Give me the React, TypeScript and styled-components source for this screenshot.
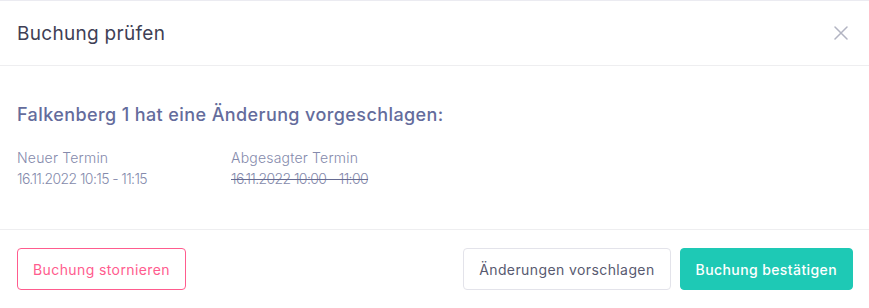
import React from "react";
import styled, { createGlobalStyle } from "styled-components";

const GlobalStyle = createGlobalStyle`
  html, body {
    margin: 0;
    padding: 0;
    background: #ffffff;
  }
  body {
    font-family: "Inter", "Noto Sans", sans-serif;
  }
`;

export default function App() {
  return (
    <>
      <GlobalStyle />
      <Modal>
        <Header>
          <Title>Buchung prüfen</Title>
          <CloseButton aria-label="Schließen">
            <svg width="14" height="14" viewBox="0 0 14 14">
              <path
                d="M1 1 L13 13 M13 1 L1 13"
                stroke="#b2b4c2"
                strokeWidth="1.5"
                strokeLinecap="round"
              />
            </svg>
          </CloseButton>
        </Header>
        <Body>
          <Heading>Falkenberg 1 hat eine Änderung vorgeschlagen:</Heading>
          <Dates>
            <DateBlock>
              <Label>Neuer Termin</Label>
              <Value>16.11.2022 10:15 - 11:15</Value>
            </DateBlock>
            <DateBlock>
              <Label>Abgesagter Termin</Label>
              <Value $struck>16.11.2022 10:00 - 11:00</Value>
            </DateBlock>
          </Dates>
        </Body>
        <Footer>
          <Button $variant="danger">Buchung stornieren</Button>
          <Actions>
            <Button $variant="ghost">Änderungen vorschlagen</Button>
            <Button $variant="primary">Buchung bestätigen</Button>
          </Actions>
        </Footer>
      </Modal>
    </>
  );
}

const Modal = styled.div`
  width: 869px;
  height: 308px;
  border-top: 1px solid #ebebf1;
  box-sizing: border-box;
  display: flex;
  flex-direction: column;
  background: #fff;
`;
const Header = styled.div`
  height: 64px;
  display: flex;
  align-items: center;
  justify-content: space-between;
  padding: 0 21px 0 17px;
  border-bottom: 1px solid #eeeef0;
`;
const Title = styled.h1`
  margin: 0;
  font-size: 19px;
  font-weight: 400;
  color: #3f3f55;
  letter-spacing: 0.3px;
`;
const CloseButton = styled.button`
  border: none;
  background: none;
  padding: 0;
  display: flex;
  cursor: pointer;
`;
const Body = styled.div`
  padding: 38px 17px 0;
  height: 164px;
  box-sizing: border-box;
  border-bottom: 1px solid #eeeef0;
`;
const Heading = styled.h2`
  margin: 0 0 23px;
  font-size: 18px;
  font-weight: 500;
  color: #646c9c;
  letter-spacing: 0.4px;
`;
const Dates = styled.div`
  display: flex;
`;
const DateBlock = styled.div`
  width: 214px;
  display: flex;
  flex-direction: column;
  gap: 2px;
`;
const Label = styled.span`
  font-size: 14px;
  font-weight: 300;
  color: #858aac;
  line-height: 19px;
  letter-spacing: 0.2px;
`;
const Value = styled.span<{ $struck?: boolean }>`
  font-size: 14px;
  font-weight: 300;
  color: #858aac;
  line-height: 19px;
  letter-spacing: -0.6px;
  text-decoration: ${(p) => (p.$struck ? "line-through" : "none")};
  text-decoration-color: #666b92;
`;
const Footer = styled.div`
  flex: 1;
  display: flex;
  align-items: center;
  justify-content: space-between;
  padding: 0 16px 0 17px;
`;
const Actions = styled.div`
  display: flex;
  gap: 9px;
`;
const Button = styled.button<{ $variant: "danger" | "ghost" | "primary" }>`
  height: 42px;
  box-sizing: border-box;
  padding: 0 15px;
  border-radius: 4px;
  font-family: inherit;
  font-size: 14px;
  letter-spacing: 0.4px;
  font-weight: ${(p) => (p.$variant === "primary" ? 500 : 400)};
  cursor: pointer;
  border: 1px solid
    ${(p) =>
      p.$variant === "danger"
        ? "#ff5c8e"
        : p.$variant === "ghost"
        ? "#e3e3ea"
        : "#1ec9b5"};
  background: ${(p) => (p.$variant === "primary" ? "#1ec9b5" : "#fff")};
  color: ${(p) =>
    p.$variant === "danger"
      ? "#ff5c8e"
      : p.$variant === "ghost"
      ? "#585a70"
      : "#ffffff"};
`;
